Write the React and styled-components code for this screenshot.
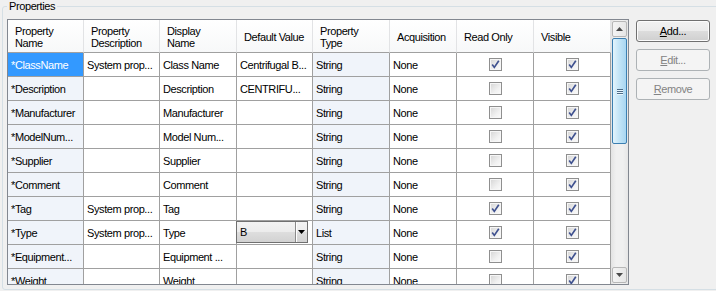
import React from "react";
import styled, { createGlobalStyle } from "styled-components";

const GlobalStyle = createGlobalStyle`
  html, body {
    margin: 0;
    padding: 0;
    background: #f0f0f0;
    overflow: hidden;
  }
  body {
    font-family: "Liberation Sans", Arial, sans-serif;
    font-size: 11px;
    letter-spacing: -0.4px;
    color: #000;
  }
`;

const COLS = [76, 76, 77, 76, 77, 67, 77, 77];

const Group = styled.fieldset`
  box-sizing: border-box;
  margin: 0 0 0 2px;
  padding: 6px 0 0 4px;
  width: 720px;
  height: 290px;
  border: 1px solid #d5dfe5;
  border-radius: 3px;
  min-width: 0;
`;

const Legend = styled.legend`
  padding: 0 2px;
  line-height: 13px;
  color: #000;
`;

const Content = styled.div`
  display: flex;
  align-items: flex-start;
  gap: 7px;
`;

const Frame = styled.div`
  box-sizing: border-box;
  display: flex;
  width: 622px;
  height: 266px;
  border: 1px solid #828790;
  background: #fff;
`;

const Table = styled.div`
  display: grid;
  grid-template-columns: ${COLS.map((w) => w + "px").join(" ")};
  grid-template-rows: 33px;
  grid-auto-rows: 24px;
  width: 603px;
  height: 264px;
  overflow: hidden;
  align-content: start;
`;

const HeadCell = styled.div`
  box-sizing: border-box;
  display: flex;
  align-items: center;
  padding: 1px 4px 0 7px;
  line-height: 12px;
  background: linear-gradient(#ffffff, #f7f8f9);
  border-right: 1px solid #e2e3e5;
  border-bottom: 1px solid #a0a0a0;
`;

const Cell = styled.div`
  box-sizing: border-box;
  display: flex;
  align-items: center;
  justify-content: ${(p) => (p.$center ? "center" : "flex-start")};
  padding: ${(p) => (p.$flush ? "0" : "0 2px 0 3px")};
  white-space: nowrap;
  overflow: ${(p) => (p.$flush ? "visible" : "hidden")};
  border-right: 1px solid #a0a0a0;
  border-bottom: 1px solid #a0a0a0;
  background: ${(p) =>
    p.$selected ? "#3399ff" : p.$shade ? "#f0f4fa" : "#ffffff"};
  color: ${(p) => (p.$selected ? "#ffffff" : "#000000")};
`;

const Box = styled.span`
  box-sizing: border-box;
  width: 13px;
  height: 13px;
  display: flex;
  align-items: center;
  justify-content: center;
  border: 1px solid #8f8f8f;
  box-shadow: inset 0 0 0 1px #f6f6f6;
  background: linear-gradient(135deg, #d4d4d4 0%, #f0f0f0 60%, #fbfbfb 100%);
`;

const Combo = styled.div`
  box-sizing: border-box;
  display: flex;
  width: 72px;
  height: 22px;
  margin: -2px 0 0 -1px;
  border: 1px solid #707070;
  background: linear-gradient(#f3f3f3 0%, #ececec 50%, #dedede 50%, #d2d2d2 100%);
`;

const ComboText = styled.span`
  flex: 1;
  display: flex;
  align-items: center;
  padding-left: 3px;
`;

const ComboButton = styled.span`
  width: 11px;
  display: flex;
  align-items: center;
  justify-content: center;
  border-left: 1px solid #8a8a8a;
  box-shadow: inset 1px 0 0 #ffffff;
`;

const ScrollBar = styled.div`
  box-sizing: border-box;
  width: 17px;
  height: 264px;
  display: flex;
  flex-direction: column;
  align-items: center;
  padding: 1px 0;
  background: linear-gradient(90deg, #e3e3e3, #f0f0f0 30%, #f0f0f0 70%, #e6e6e6);
`;

const ArrowButton = styled.div`
  box-sizing: border-box;
  width: 15px;
  height: 16px;
  display: flex;
  align-items: center;
  justify-content: center;
  border: 1px solid #b7b7b7;
  border-radius: 2px;
  background: linear-gradient(90deg, #f4f4f4, #e6e6e6);
`;

const Thumb = styled.div`
  box-sizing: border-box;
  width: 15px;
  height: 106px;
  margin-top: 1px;
  display: flex;
  flex-direction: column;
  align-items: center;
  justify-content: center;
  gap: 1px;
  border: 1px solid #3c7fb1;
  border-radius: 2px;
  background: linear-gradient(90deg, #e3f4fc, #c4e5f7 45%, #a9d6f1 100%);
`;

const Grip = styled.span`
  width: 6px;
  height: 1px;
  background: #4d6b87;
  box-shadow: 0 1px 0 #e8f6fd;
`;

const Track = styled.div`
  flex: 1;
`;

const Buttons = styled.div`
  display: flex;
  flex-direction: column;
  gap: 7px;
  padding-top: 1px;
`;

const Button = styled.div`
  box-sizing: border-box;
  width: 74px;
  height: 22px;
  display: flex;
  align-items: center;
  justify-content: center;
  border-radius: 3px;
  border: 1px solid ${(p) => (p.$disabled ? "#adb2b5" : "#707070")};
  box-shadow: ${(p) => (p.$disabled ? "none" : "inset 0 0 0 1px #fcfcfc")};
  background: ${(p) =>
    p.$disabled
      ? "#f4f4f4"
      : "linear-gradient(#f2f2f2 0%, #ebebeb 50%, #dddddd 50%, #cfcfcf 100%)"};
  color: ${(p) => (p.$disabled ? "#838383" : "#000")};
`;

const Triangle = ({ down }) => (
  <svg width="7" height="4" viewBox="0 0 7 4">
    <path
      d={down ? "M0 0 H7 L3.5 4 Z" : "M0 4 H7 L3.5 0 Z"}
      fill="#4a4a4a"
    />
  </svg>
);

const CheckBox = ({ checked }) => (
  <Box>
    {checked && (
      <svg width="9" height="9" viewBox="0 0 9 9">
        <path
          d="M1.2 4.6 L3.3 7.4 L7.8 0.8"
          fill="none"
          stroke="#3f518f"
          strokeWidth="1.7"
        />
      </svg>
    )}
  </Box>
);

const headers = [
  ["Property", "Name"],
  ["Property", "Description"],
  ["Display", "Name"],
  ["Default Value"],
  ["Property", "Type"],
  ["Acquisition"],
  ["Read Only"],
  ["Visible"],
];

const rows = [
  ["*ClassName", "System prop...", "Class Name", "Centrifugal B...", "String", "None", true, true],
  ["*Description", "", "Description", "CENTRIFU...", "String", "None", false, true],
  ["*Manufacturer", "", "Manufacturer", "", "String", "None", false, true],
  ["*ModelNum...", "", "Model Num...", "", "String", "None", false, true],
  ["*Supplier", "", "Supplier", "", "String", "None", false, true],
  ["*Comment", "", "Comment", "", "String", "None", false, true],
  ["*Tag", "System prop...", "Tag", "", "String", "None", true, true],
  ["*Type", "System prop...", "Type", { combo: "B" }, "List", "None", true, true],
  ["*Equipment...", "", "Equipment ...", "", "String", "None", false, true],
  ["*Weight", "", "Weight", "", "String", "None", false, true],
];

export default function App() {
  return (
    <>
      <GlobalStyle />
      <Group>
        <Legend>Properties</Legend>
        <Content>
          <Frame>
            <Table>
              {headers.map((h, i) => (
                <HeadCell key={"h" + i}>
                  <span>
                    {h[0]}
                    {h[1] && (
                      <>
                        <br />
                        {h[1]}
                      </>
                    )}
                  </span>
                </HeadCell>
              ))}
              {rows.map((r, ri) =>
                r.map((v, ci) => {
                  const key = ri + "-" + ci;
                  if (ci >= 6)
                    return (
                      <Cell key={key} $center>
                        <CheckBox checked={v} />
                      </Cell>
                    );
                  if (v && v.combo)
                    return (
                      <Cell key={key} $flush>
                        <Combo>
                          <ComboText>{v.combo}</ComboText>
                          <ComboButton>
                            <svg width="7" height="4" viewBox="0 0 7 4">
                              <path d="M0 0 H7 L3.5 4 Z" fill="#000" />
                            </svg>
                          </ComboButton>
                        </Combo>
                      </Cell>
                    );
                  return (
                    <Cell
                      key={key}
                      $shade={ci === 0 || ci === 4}
                      $selected={ri === 0 && ci === 0}
                    >
                      {v}
                    </Cell>
                  );
                })
              )}
            </Table>
            <ScrollBar>
              <ArrowButton>
                <Triangle />
              </ArrowButton>
              <Thumb>
                <Grip />
                <Grip />
                <Grip />
              </Thumb>
              <Track />
              <ArrowButton>
                <Triangle down />
              </ArrowButton>
            </ScrollBar>
          </Frame>
          <Buttons>
            <Button>
              <span>
                <u>A</u>dd...
              </span>
            </Button>
            <Button $disabled>
              <span>
                <u>E</u>dit...
              </span>
            </Button>
            <Button $disabled>
              <span>
                <u>R</u>emove
              </span>
            </Button>
          </Buttons>
        </Content>
      </Group>
    </>
  );
}
